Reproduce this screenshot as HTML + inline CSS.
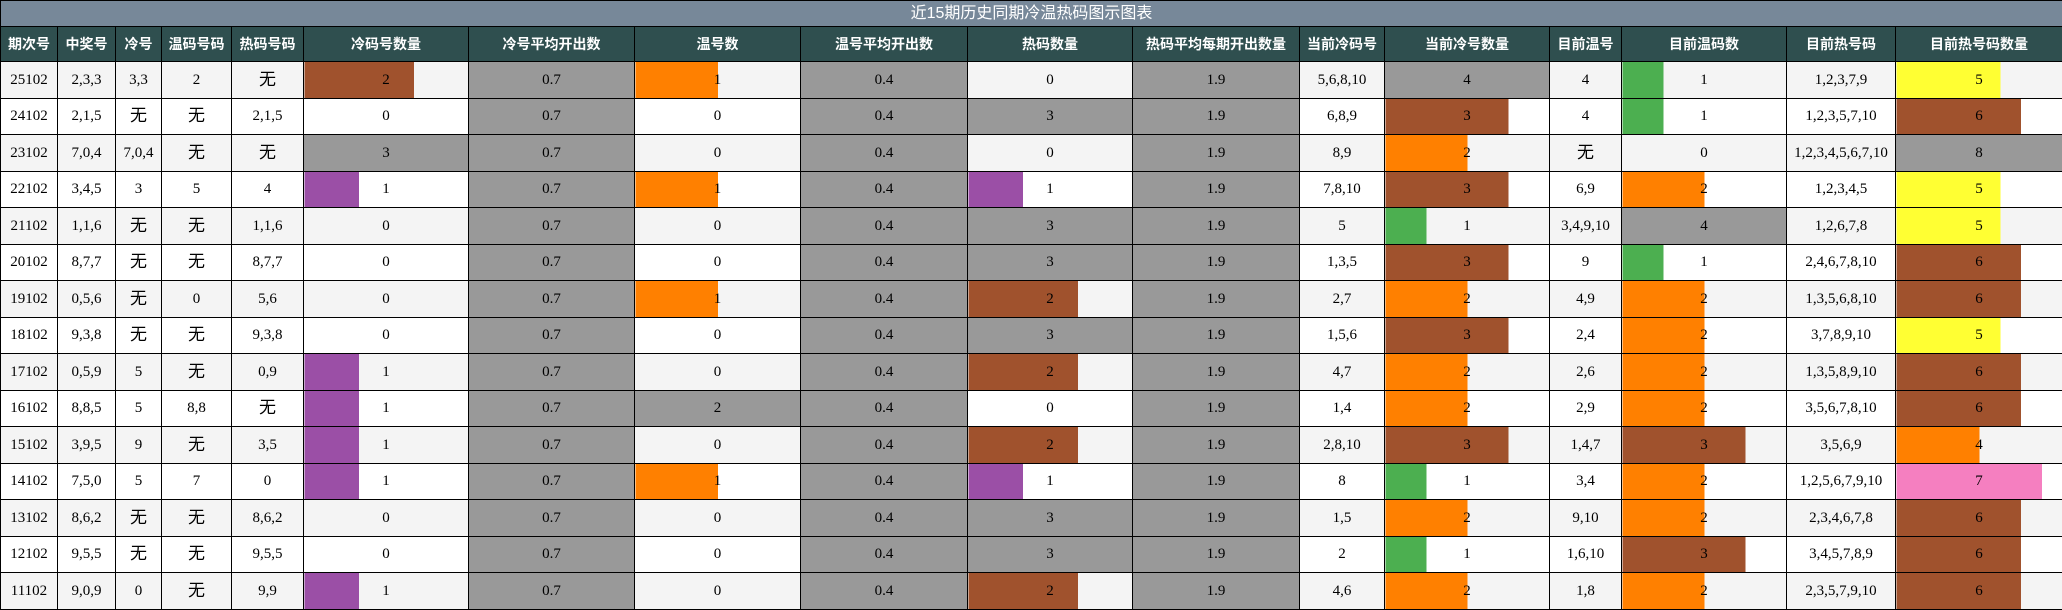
<!DOCTYPE html>
<html><head><meta charset="utf-8"><style>
body{margin:0;width:2062px;height:610px;overflow:hidden;background:#fff}
table{border-collapse:collapse;table-layout:fixed;width:2062px;font-family:"Liberation Serif","Noto Serif CJK SC",serif;font-size:15px;line-height:16px}
td,th{border:1px solid #000;text-align:center;padding:0;overflow:hidden;white-space:nowrap;line-height:16px}
tr.t{height:26px}
.t td{background:#778899;color:#fff;font-family:"Liberation Sans","Noto Sans CJK SC",sans-serif;font-size:16px}
tr.h{height:35px}
th{background:#2f4f4f;color:#fff;font-family:"Liberation Sans","Noto Sans CJK SC",sans-serif;font-size:14px;font-weight:bold}
tbody tr{height:36.5px}
tr.a td{background-color:#f4f4f4}
td.g{background:#999 !important}
.w{font-size:17px;font-family:"Liberation Sans","Noto Sans CJK SC",sans-serif}
</style></head><body>
<table>
<colgroup><col style="width:57px"><col style="width:58px"><col style="width:46px"><col style="width:70px"><col style="width:72px"><col style="width:165px"><col style="width:166px"><col style="width:166px"><col style="width:167px"><col style="width:165px"><col style="width:167px"><col style="width:85px"><col style="width:165px"><col style="width:72px"><col style="width:165px"><col style="width:109px"><col style="width:167px"></colgroup>
<thead>
<tr class="t"><td colspan="17">近15期历史同期冷温热码图示图表</td></tr>
<tr class="h"><th>期次号</th><th>中奖号</th><th>冷号</th><th>温码号码</th><th>热码号码</th><th>冷码号数量</th><th>冷号平均开出数</th><th>温号数</th><th>温号平均开出数</th><th>热码数量</th><th>热码平均每期开出数量</th><th>当前冷码号</th><th>当前冷号数量</th><th>目前温号</th><th>目前温码数</th><th>目前热号码</th><th>目前热号码数量</th></tr>
</thead>
<tbody>
<tr class="a"><td>25102</td><td>2,3,3</td><td>3,3</td><td>2</td><td class="w">无</td><td style="background:linear-gradient(90deg,#a0522d 66.7%,#f4f4f4 66.7%)">2</td><td class="g">0.7</td><td style="background:linear-gradient(90deg,#ff8000 50%,#f4f4f4 50%)">1</td><td class="g">0.4</td><td>0</td><td class="g">1.9</td><td>5,6,8,10</td><td class="g">4</td><td>4</td><td style="background:linear-gradient(90deg,#4caf50 25%,#f4f4f4 25%)">1</td><td>1,2,3,7,9</td><td style="background:linear-gradient(90deg,#ffff33 62.5%,#f4f4f4 62.5%)">5</td></tr>
<tr><td>24102</td><td>2,1,5</td><td class="w">无</td><td class="w">无</td><td>2,1,5</td><td>0</td><td class="g">0.7</td><td>0</td><td class="g">0.4</td><td class="g">3</td><td class="g">1.9</td><td>6,8,9</td><td style="background:linear-gradient(90deg,#a0522d 75%,#fff 75%)">3</td><td>4</td><td style="background:linear-gradient(90deg,#4caf50 25%,#fff 25%)">1</td><td>1,2,3,5,7,10</td><td style="background:linear-gradient(90deg,#a0522d 75%,#fff 75%)">6</td></tr>
<tr class="a"><td>23102</td><td>7,0,4</td><td>7,0,4</td><td class="w">无</td><td class="w">无</td><td class="g">3</td><td class="g">0.7</td><td>0</td><td class="g">0.4</td><td>0</td><td class="g">1.9</td><td>8,9</td><td style="background:linear-gradient(90deg,#ff8000 50%,#f4f4f4 50%)">2</td><td class="w">无</td><td>0</td><td>1,2,3,4,5,6,7,10</td><td class="g">8</td></tr>
<tr><td>22102</td><td>3,4,5</td><td>3</td><td>5</td><td>4</td><td style="background:linear-gradient(90deg,#9b4fa6 33.3%,#fff 33.3%)">1</td><td class="g">0.7</td><td style="background:linear-gradient(90deg,#ff8000 50%,#fff 50%)">1</td><td class="g">0.4</td><td style="background:linear-gradient(90deg,#9b4fa6 33.3%,#fff 33.3%)">1</td><td class="g">1.9</td><td>7,8,10</td><td style="background:linear-gradient(90deg,#a0522d 75%,#fff 75%)">3</td><td>6,9</td><td style="background:linear-gradient(90deg,#ff8000 50%,#fff 50%)">2</td><td>1,2,3,4,5</td><td style="background:linear-gradient(90deg,#ffff33 62.5%,#fff 62.5%)">5</td></tr>
<tr class="a"><td>21102</td><td>1,1,6</td><td class="w">无</td><td class="w">无</td><td>1,1,6</td><td>0</td><td class="g">0.7</td><td>0</td><td class="g">0.4</td><td class="g">3</td><td class="g">1.9</td><td>5</td><td style="background:linear-gradient(90deg,#4caf50 25%,#f4f4f4 25%)">1</td><td>3,4,9,10</td><td class="g">4</td><td>1,2,6,7,8</td><td style="background:linear-gradient(90deg,#ffff33 62.5%,#f4f4f4 62.5%)">5</td></tr>
<tr><td>20102</td><td>8,7,7</td><td class="w">无</td><td class="w">无</td><td>8,7,7</td><td>0</td><td class="g">0.7</td><td>0</td><td class="g">0.4</td><td class="g">3</td><td class="g">1.9</td><td>1,3,5</td><td style="background:linear-gradient(90deg,#a0522d 75%,#fff 75%)">3</td><td>9</td><td style="background:linear-gradient(90deg,#4caf50 25%,#fff 25%)">1</td><td>2,4,6,7,8,10</td><td style="background:linear-gradient(90deg,#a0522d 75%,#fff 75%)">6</td></tr>
<tr class="a"><td>19102</td><td>0,5,6</td><td class="w">无</td><td>0</td><td>5,6</td><td>0</td><td class="g">0.7</td><td style="background:linear-gradient(90deg,#ff8000 50%,#f4f4f4 50%)">1</td><td class="g">0.4</td><td style="background:linear-gradient(90deg,#a0522d 66.7%,#f4f4f4 66.7%)">2</td><td class="g">1.9</td><td>2,7</td><td style="background:linear-gradient(90deg,#ff8000 50%,#f4f4f4 50%)">2</td><td>4,9</td><td style="background:linear-gradient(90deg,#ff8000 50%,#f4f4f4 50%)">2</td><td>1,3,5,6,8,10</td><td style="background:linear-gradient(90deg,#a0522d 75%,#f4f4f4 75%)">6</td></tr>
<tr><td>18102</td><td>9,3,8</td><td class="w">无</td><td class="w">无</td><td>9,3,8</td><td>0</td><td class="g">0.7</td><td>0</td><td class="g">0.4</td><td class="g">3</td><td class="g">1.9</td><td>1,5,6</td><td style="background:linear-gradient(90deg,#a0522d 75%,#fff 75%)">3</td><td>2,4</td><td style="background:linear-gradient(90deg,#ff8000 50%,#fff 50%)">2</td><td>3,7,8,9,10</td><td style="background:linear-gradient(90deg,#ffff33 62.5%,#fff 62.5%)">5</td></tr>
<tr class="a"><td>17102</td><td>0,5,9</td><td>5</td><td class="w">无</td><td>0,9</td><td style="background:linear-gradient(90deg,#9b4fa6 33.3%,#f4f4f4 33.3%)">1</td><td class="g">0.7</td><td>0</td><td class="g">0.4</td><td style="background:linear-gradient(90deg,#a0522d 66.7%,#f4f4f4 66.7%)">2</td><td class="g">1.9</td><td>4,7</td><td style="background:linear-gradient(90deg,#ff8000 50%,#f4f4f4 50%)">2</td><td>2,6</td><td style="background:linear-gradient(90deg,#ff8000 50%,#f4f4f4 50%)">2</td><td>1,3,5,8,9,10</td><td style="background:linear-gradient(90deg,#a0522d 75%,#f4f4f4 75%)">6</td></tr>
<tr><td>16102</td><td>8,8,5</td><td>5</td><td>8,8</td><td class="w">无</td><td style="background:linear-gradient(90deg,#9b4fa6 33.3%,#fff 33.3%)">1</td><td class="g">0.7</td><td class="g">2</td><td class="g">0.4</td><td>0</td><td class="g">1.9</td><td>1,4</td><td style="background:linear-gradient(90deg,#ff8000 50%,#fff 50%)">2</td><td>2,9</td><td style="background:linear-gradient(90deg,#ff8000 50%,#fff 50%)">2</td><td>3,5,6,7,8,10</td><td style="background:linear-gradient(90deg,#a0522d 75%,#fff 75%)">6</td></tr>
<tr class="a"><td>15102</td><td>3,9,5</td><td>9</td><td class="w">无</td><td>3,5</td><td style="background:linear-gradient(90deg,#9b4fa6 33.3%,#f4f4f4 33.3%)">1</td><td class="g">0.7</td><td>0</td><td class="g">0.4</td><td style="background:linear-gradient(90deg,#a0522d 66.7%,#f4f4f4 66.7%)">2</td><td class="g">1.9</td><td>2,8,10</td><td style="background:linear-gradient(90deg,#a0522d 75%,#f4f4f4 75%)">3</td><td>1,4,7</td><td style="background:linear-gradient(90deg,#a0522d 75%,#f4f4f4 75%)">3</td><td>3,5,6,9</td><td style="background:linear-gradient(90deg,#ff8000 50%,#f4f4f4 50%)">4</td></tr>
<tr><td>14102</td><td>7,5,0</td><td>5</td><td>7</td><td>0</td><td style="background:linear-gradient(90deg,#9b4fa6 33.3%,#fff 33.3%)">1</td><td class="g">0.7</td><td style="background:linear-gradient(90deg,#ff8000 50%,#fff 50%)">1</td><td class="g">0.4</td><td style="background:linear-gradient(90deg,#9b4fa6 33.3%,#fff 33.3%)">1</td><td class="g">1.9</td><td>8</td><td style="background:linear-gradient(90deg,#4caf50 25%,#fff 25%)">1</td><td>3,4</td><td style="background:linear-gradient(90deg,#ff8000 50%,#fff 50%)">2</td><td>1,2,5,6,7,9,10</td><td style="background:linear-gradient(90deg,#f57fc0 87.5%,#fff 87.5%)">7</td></tr>
<tr class="a"><td>13102</td><td>8,6,2</td><td class="w">无</td><td class="w">无</td><td>8,6,2</td><td>0</td><td class="g">0.7</td><td>0</td><td class="g">0.4</td><td class="g">3</td><td class="g">1.9</td><td>1,5</td><td style="background:linear-gradient(90deg,#ff8000 50%,#f4f4f4 50%)">2</td><td>9,10</td><td style="background:linear-gradient(90deg,#ff8000 50%,#f4f4f4 50%)">2</td><td>2,3,4,6,7,8</td><td style="background:linear-gradient(90deg,#a0522d 75%,#f4f4f4 75%)">6</td></tr>
<tr><td>12102</td><td>9,5,5</td><td class="w">无</td><td class="w">无</td><td>9,5,5</td><td>0</td><td class="g">0.7</td><td>0</td><td class="g">0.4</td><td class="g">3</td><td class="g">1.9</td><td>2</td><td style="background:linear-gradient(90deg,#4caf50 25%,#fff 25%)">1</td><td>1,6,10</td><td style="background:linear-gradient(90deg,#a0522d 75%,#fff 75%)">3</td><td>3,4,5,7,8,9</td><td style="background:linear-gradient(90deg,#a0522d 75%,#fff 75%)">6</td></tr>
<tr class="a"><td>11102</td><td>9,0,9</td><td>0</td><td class="w">无</td><td>9,9</td><td style="background:linear-gradient(90deg,#9b4fa6 33.3%,#f4f4f4 33.3%)">1</td><td class="g">0.7</td><td>0</td><td class="g">0.4</td><td style="background:linear-gradient(90deg,#a0522d 66.7%,#f4f4f4 66.7%)">2</td><td class="g">1.9</td><td>4,6</td><td style="background:linear-gradient(90deg,#ff8000 50%,#f4f4f4 50%)">2</td><td>1,8</td><td style="background:linear-gradient(90deg,#ff8000 50%,#f4f4f4 50%)">2</td><td>2,3,5,7,9,10</td><td style="background:linear-gradient(90deg,#a0522d 75%,#f4f4f4 75%)">6</td></tr>
</tbody></table>
</body></html>
